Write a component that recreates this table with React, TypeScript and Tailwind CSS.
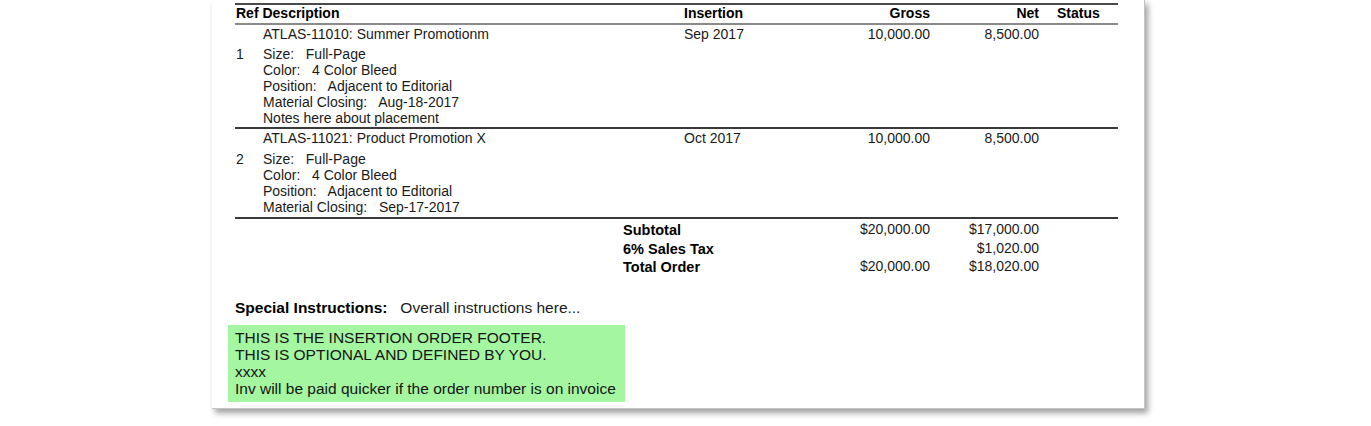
import React from "react";

const font = { fontFamily: '"Liberation Sans", Arial, sans-serif' };

function Row({
  idx,
  title,
  insertion,
  gross,
  net,
  details,
  gapClass,
  pbClass,
}: {
  idx: string;
  title: string;
  insertion: string;
  gross: string;
  net: string;
  details: string[];
  gapClass: string;
  pbClass: string;
}) {
  return (
    <div className={`border-b-2 border-[#3a3a3a] ${pbClass}`}>
      <div className="grid grid-cols-[28px_421px_150px_96px_109px_79px] leading-4 pt-[1px]">
        <div />
        <div>{title}</div>
        <div>{insertion}</div>
        <div className="text-right">{gross}</div>
        <div className="text-right">{net}</div>
        <div />
      </div>
      <div className={`flex leading-4 ${gapClass}`}>
        <div className="w-[28px] pl-[1px]">{idx}</div>
        <div className="flex flex-col whitespace-pre">
          {details.map((d) => (
            <div key={d}>{d}</div>
          ))}
        </div>
      </div>
    </div>
  );
}

export default function App() {
  return (
    <div className="w-[1371px] h-[426px] bg-white overflow-hidden" style={font}>
      <div className="ml-[212px] w-[933px] h-[409px] bg-white border-r border-b border-[#c4c4c4] shadow-[3px_4px_6px_rgba(0,0,0,0.38)] pt-[3px] pl-[23px] text-[14px] text-[#1a1a1a]">
        <div className="w-[883px]">
          {/* header */}
          <div className="border-t-2 border-[#4a4a4a] border-b-2 border-b-[#8a8a8a] grid grid-cols-[449px_150px_96px_109px_79px] font-bold text-black leading-4 h-[22px]">
            <div className="pl-[1px]">Ref Description</div>
            <div>Insertion</div>
            <div className="text-right">Gross</div>
            <div className="text-right">Net</div>
            <div className="pl-[18px]">Status</div>
          </div>

          <Row
            idx="1"
            title="ATLAS-11010: Summer Promotionm"
            insertion="Sep 2017"
            gross="10,000.00"
            net="8,500.00"
            gapClass="mt-[4px]"
            pbClass="pb-[1px]"
            details={[
              "Size:   Full-Page",
              "Color:   4 Color Bleed",
              "Position:   Adjacent to Editorial",
              "Material Closing:   Aug-18-2017",
              "Notes here about placement",
            ]}
          />
          <Row
            idx="2"
            title="ATLAS-11021: Product Promotion X"
            insertion="Oct 2017"
            gross="10,000.00"
            net="8,500.00"
            gapClass="mt-[5px]"
            pbClass="pb-[2px]"
            details={[
              "Size:   Full-Page",
              "Color:   4 Color Bleed",
              "Position:   Adjacent to Editorial",
              "Material Closing:   Sep-17-2017",
            ]}
          />

          {/* totals */}
          <div className="flex flex-col pt-[1px]">
            {[
              ["Subtotal", "$20,000.00", "$17,000.00"],
              ["6% Sales Tax", "", "$1,020.00"],
              ["Total Order", "$20,000.00", "$18,020.00"],
            ].map(([l, g, n]) => (
              <div
                key={l}
                className="grid grid-cols-[388px_211px_96px_109px_79px] leading-[18.5px]"
              >
                <div />
                <div className="font-bold text-black text-[14.5px] translate-y-[1px]">{l}</div>
                <div className="text-right">{g}</div>
                <div className="text-right">{n}</div>
                <div />
              </div>
            ))}
          </div>

          {/* special instructions */}
          <div className="mt-[23px] text-[15.5px] leading-[18px] whitespace-pre">
            <span className="font-bold text-black">Special Instructions:</span>
            <span>{"   Overall instructions here..."}</span>
          </div>

          <div className="mt-[8px] -ml-[7px] w-[397px] h-[77px] bg-[#a4f6a0] pl-[7px] pt-[4px] text-[15.5px] leading-[17.3px] text-[#141414]">
            <div>THIS IS THE INSERTION ORDER FOOTER.</div>
            <div>THIS IS OPTIONAL AND DEFINED BY YOU.</div>
            <div>xxxx</div>
            <div>Inv will be paid quicker if the order number is on invoice</div>
          </div>
        </div>
      </div>
    </div>
  );
}
